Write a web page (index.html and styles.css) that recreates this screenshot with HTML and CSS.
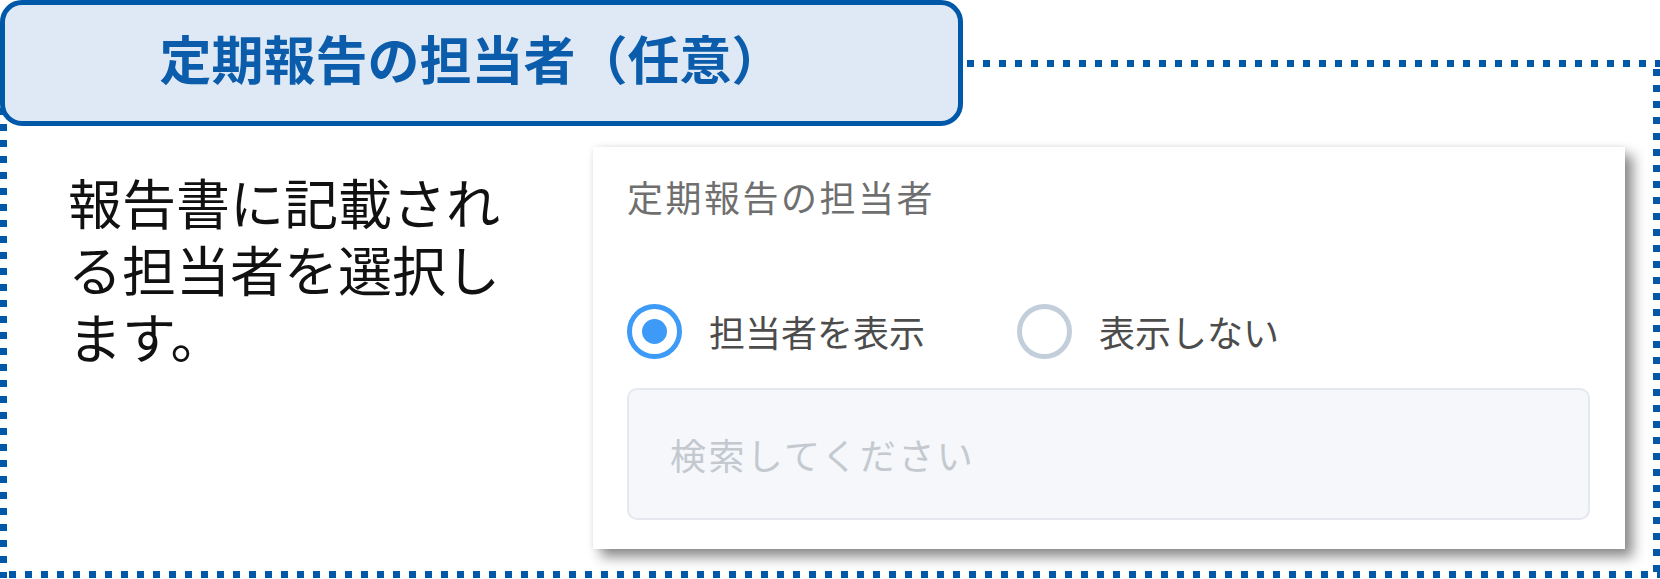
FILE: index.html
```html
<!DOCTYPE html>
<html lang="ja">
<head>
  <meta charset="UTF-8">
  <meta name="viewport" content="width=device-width, initial-scale=1.0">
  <title>定期報告の担当者</title>
  <link rel="stylesheet" href="styles.css">
</head>
<body>
  <div class="sheet">
    <div class="frame">
      <div class="tab">定期報告の担当者（任意）</div>

      <div class="body">
        <p class="desc">報告書に記載される担当者を選択します。</p>

        <div class="card">
          <div class="card-label">定期報告の担当者</div>

          <div class="radios">
            <label class="radio checked">
              <span class="dot"></span>
              <span class="radio-text">担当者を表示</span>
            </label>
            <label class="radio">
              <span class="dot"></span>
              <span class="radio-text">表示しない</span>
            </label>
          </div>

          <div class="search">検索してください</div>
        </div>
      </div>
    </div>
  </div>
</body>
</html>
```

FILE: styles.css
```css
*{
  box-sizing: border-box;
  font-family: "Noto Sans CJK JP", "Noto Sans", sans-serif;
}
body{
  margin: 0;
  background: #fff;
  overflow: hidden;
}
.sheet{
  padding-top: 60px;
}

/* square-dotted outline drawn with repeating gradients */
.frame{
  display: flex;
  flex-direction: column;
  height: 518px;
  background:
    linear-gradient(to right, #0058a9 7px, transparent 7px) 7px 0 / 16px 7px repeat-x,
    linear-gradient(to right, #0058a9 7px, transparent 7px) 9px 100% / 16px 7px repeat-x,
    linear-gradient(to bottom, #0058a9 7px, transparent 7px) 0 0 / 7px 16px repeat-y,
    linear-gradient(to bottom, #0058a9 7px, transparent 7px) 100% 9px / 7px 16px repeat-y;
}

.tab{
  margin-top: -60px;
  width: 963px;
  height: 126px;
  display: flex;
  align-items: center;
  justify-content: center;
  padding: 0 20px 10px 0;
  border: 5px solid #0058a9;
  border-radius: 22px;
  background: #dee9f5;
  color: #0b5cab;
  font-size: 52px;
  font-weight: bold;
  line-height: 1;
}

.body{
  display: flex;
  margin-top: 21px;
}
.desc{
  flex: 0 0 593px;
  margin: 0;
  padding: 21px 75px 0 68px;
  font-size: 54px;
  line-height: 67px;
  color: #111;
}

.card{
  width: 1032px;
  padding: 29px 35px 29px 34px;
  background: #fff;
  box-shadow: 8px 8px 12px rgba(0, 0, 0, .45), 0 0 6px rgba(0, 0, 0, .08);
}
.card-label{
  font-size: 36px;
  line-height: 40px;
  letter-spacing: 2.5px;
  color: #6f6f6f;
}

.radios{
  display: flex;
  align-items: center;
  gap: 92px;
  margin-top: 87px;
  height: 56px;
}
.radio{
  display: flex;
  align-items: center;
  gap: 27px;
}
.dot{
  width: 55px;
  height: 55px;
  border: 5px solid #c3cedb;
  border-radius: 50%;
  display: flex;
  align-items: center;
  justify-content: center;
}
.radio.checked .dot{
  border-color: #3d9bf7;
}
.radio.checked .dot::after{
  content: "";
  width: 25px;
  height: 25px;
  border-radius: 50%;
  background: #3d9bf7;
}
.radio-text{
  font-size: 36px;
  line-height: 40px;
  color: #4c4c4c;
}

.search{
  margin-top: 29px;
  height: 132px;
  display: flex;
  align-items: center;
  padding: 0 0 0 41px;
  border: 2px solid #e5e8ee;
  border-radius: 10px;
  background: #f5f7fa;
  font-size: 36px;
  letter-spacing: 2.4px;
  color: #c4c9d0;
}
```
